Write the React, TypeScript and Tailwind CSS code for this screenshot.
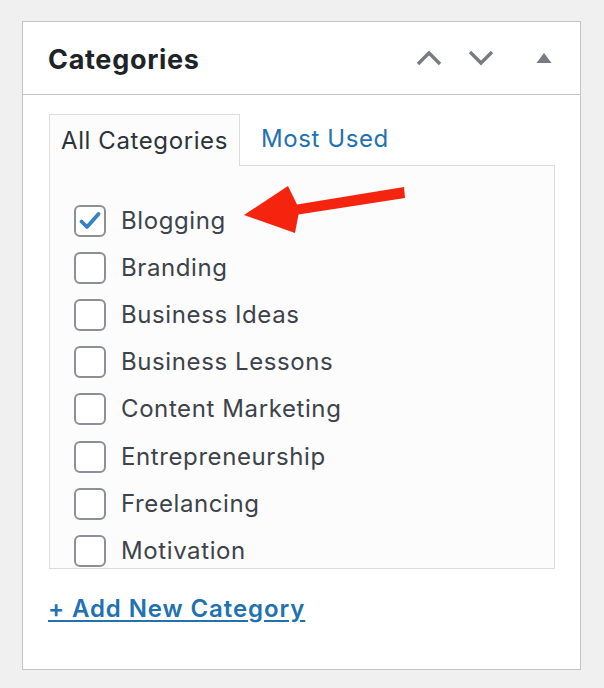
import { useState } from 'react';

const categories = [
  'Blogging',
  'Branding',
  'Business Ideas',
  'Business Lessons',
  'Content Marketing',
  'Entrepreneurship',
  'Freelancing',
  'Motivation',
];

function Checkbox({ checked, onChange }: { checked: boolean; onChange: () => void }) {
  return (
    <button
      onClick={onChange}
      className="w-[32px] h-[32px] shrink-0 rounded-[6px] border-2 border-[#8c8f94] bg-white flex items-center justify-center"
    >
      {checked && (
        <svg width="24" height="24" viewBox="0 0 24 24">
          <path d="M3.5 12.5l5.5 5.5L20.5 5" fill="none" stroke="#3582c4" strokeWidth={3.8} strokeLinecap="round" strokeLinejoin="round" />
        </svg>
      )}
    </button>
  );
}

export default function App() {
  const [checked, setChecked] = useState<string[]>(['Blogging']);
  const [tab, setTab] = useState<'all' | 'popular'>('all');

  const toggle = (name: string) => {
    setChecked(checked.includes(name) ? checked.filter((c) => c !== name) : [...checked, name]);
  };

  return (
    <div className="bg-[#f0f0f1] w-[604px] h-[688px] pt-[21px] pl-[22px]" style={{ fontFamily: 'Inter, "Noto Sans", sans-serif' }}>
      <div className="relative w-[559px] h-[649px] bg-white border border-[#c3c4c7]">
        {/* header */}
        <div className="h-[73px] border-b border-[#c3c4c7] flex items-center pl-[25px] pr-[27px]">
          <h2 className="text-[27px] font-bold text-[#1d2327] tracking-[0.7px] mt-[4px]">Categories</h2>
          <div className="ml-auto flex items-center">
            <svg width="28" height="18" viewBox="0 0 28 18" className="mr-[24px]">
              <path d="M3 15L14 4l11 11" fill="none" stroke="#787c82" strokeWidth={3.4} />
            </svg>
            <svg width="28" height="18" viewBox="0 0 28 18" className="mr-[40px]">
              <path d="M3 3l11 11L25 3" fill="none" stroke="#787c82" strokeWidth={3.4} />
            </svg>
            <svg width="18" height="14" viewBox="0 0 18 14">
              <path d="M9 2L16.5 12H1.5z" fill="#787c82" />
            </svg>
          </div>
        </div>

        <div className="pt-[18px] pl-[26px] pr-[25px] tracking-[0.6px]">
          {/* tabs */}
          <div className="flex items-end h-[52px]">
            <button
              onClick={() => setTab('all')}
              className={`h-[52px] px-[11px] text-[24px] relative -mb-px z-10 ${
                tab === 'all' ? 'border border-b-0 border-[#dcdcde] bg-[#fcfcfc] text-[#2c3338]' : 'text-[#2271b1]'
              }`}
            >
              All Categories
            </button>
            <button
              onClick={() => setTab('popular')}
              className={`h-[52px] ml-[10px] px-[11px] text-[24px] ${
                tab === 'popular' ? 'border border-b-0 border-[#dcdcde] bg-[#fcfcfc] text-[#2c3338]' : 'text-[#2271b1]'
              }`}
            >
              Most Used
            </button>
          </div>

          {/* list */}
          <div className="h-[404px] border border-[#dcdcde] bg-[#fcfcfc] overflow-hidden pt-[31px] pl-[24px]">
            {categories.map((name) => (
              <label key={name} className="flex items-center h-[47.2px] cursor-pointer">
                <Checkbox checked={checked.includes(name)} onChange={() => toggle(name)} />
                <span className="ml-[15px] text-[24px] text-[#3c434a]">{name}</span>
              </label>
            ))}
          </div>

          <a href="#" className="inline-block mt-[22px] -ml-px text-[24px] font-semibold text-[#2271b1] tracking-[0.9px] underline underline-offset-[3px]">
            + Add New Category
          </a>
        </div>

        {/* annotation arrow */}
        <svg className="absolute left-0 top-0 pointer-events-none" width="559" height="649" viewBox="22 21 559 649">
          <path d="M403 186L296 203.5L287 185L243 214L294 232L297.5 213.5L404 197Z" fill="#f5240e" />
        </svg>
      </div>
    </div>
  );
}
